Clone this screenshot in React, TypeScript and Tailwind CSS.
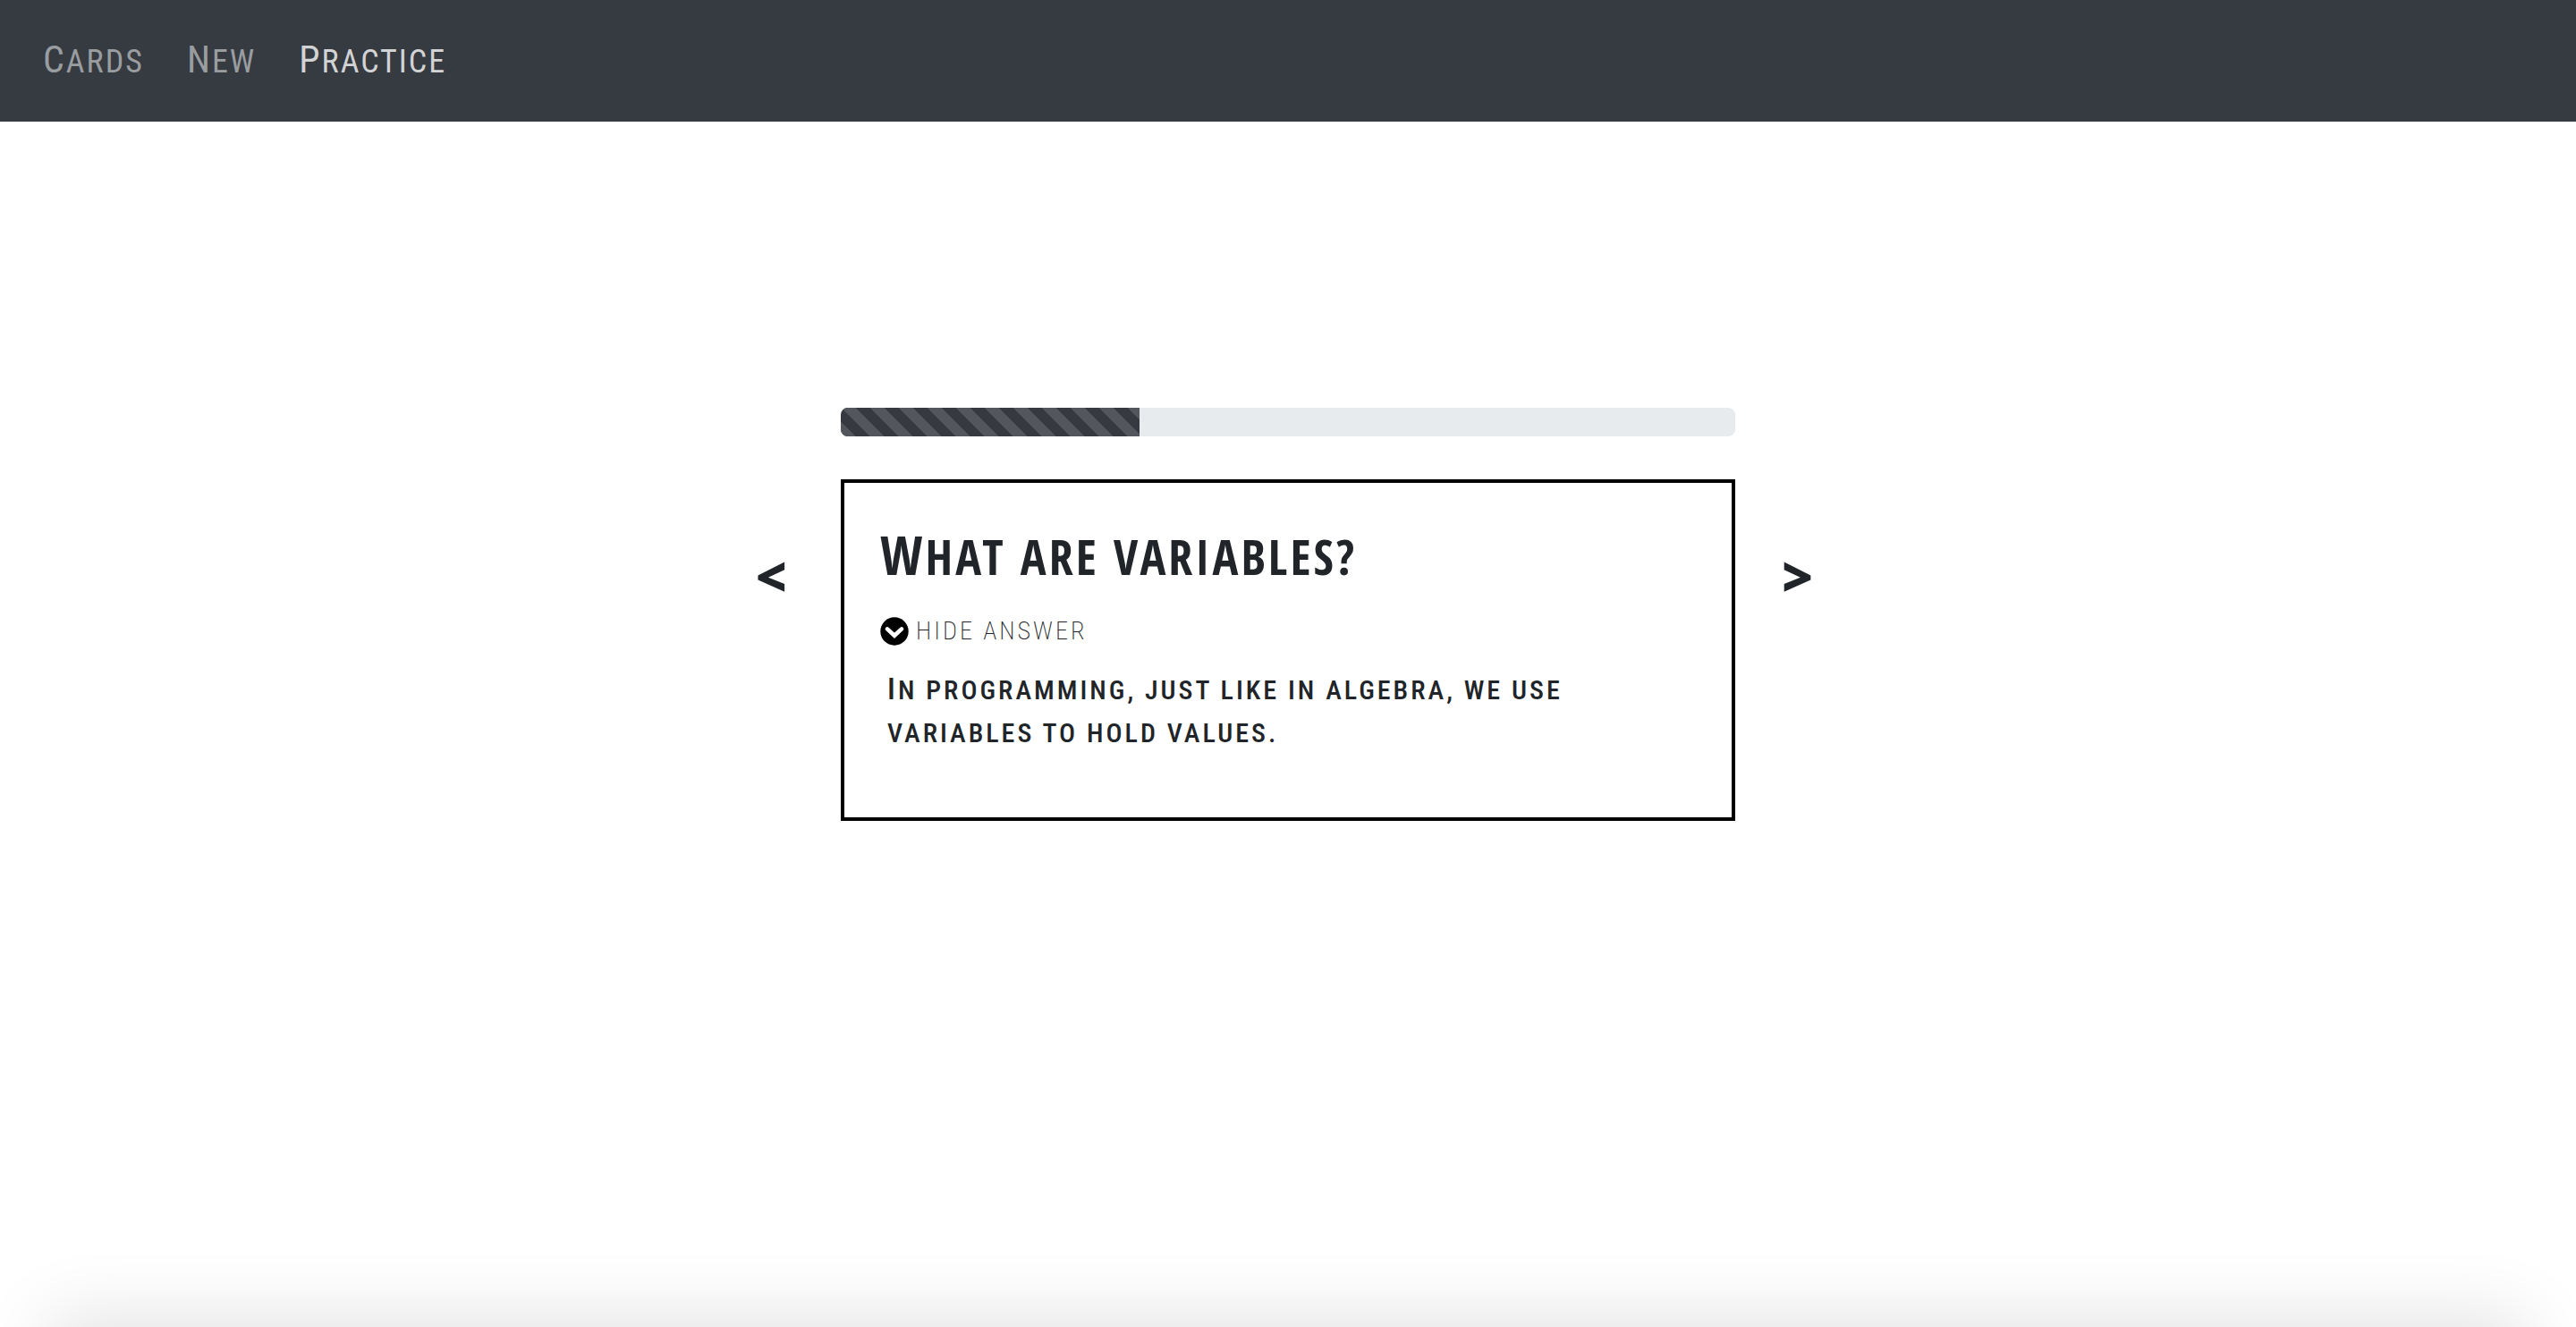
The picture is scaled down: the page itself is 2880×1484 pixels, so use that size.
import { useState } from "react";

const links = [
  { label: "Cards", active: false },
  { label: "New", active: false },
  { label: "Practice", active: true },
];

function ChevronCircle({ open }: { open: boolean }) {
  return (
    <svg viewBox="0 0 32 32" className={open ? "size-8" : "size-8 -rotate-90"} aria-hidden="true">
      <circle cx="16" cy="16" r="15.7" fill="#000" />
      <path d="M8 13.4 16 20.8 24 13.4" fill="none" stroke="#fff" strokeWidth="4.6" strokeLinecap="round" strokeLinejoin="miter" />
    </svg>
  );
}

function Progress({ value }: { value: number }) {
  return (
    <div
      role="progressbar"
      aria-label="Practice progress"
      aria-valuenow={value}
      aria-valuemin={0}
      aria-valuemax={100}
      className="h-8 overflow-hidden rounded-lg bg-[#e8ebee]"
    >
      <div
        className="h-full bg-[#363940] bg-[linear-gradient(45deg,#53575b_25%,transparent_25%,transparent_50%,#53575b_50%,#53575b_75%,transparent_75%,transparent)] bg-[length:32px_32px]"
        style={{ width: `${value}%` }}
      />
    </div>
  );
}

export default function App() {
  const [open, setOpen] = useState(true);

  return (
    <div className="relative flex min-h-screen flex-col overflow-hidden bg-white font-['Roboto_Condensed',sans-serif] text-[#212529]">
      <nav className="flex h-34 items-center gap-12 bg-[#363a41] px-12 text-[36px] leading-16 tracking-[2px] uppercase">
        {links.map(({ label, active }) => (
          <a
            key={label}
            href="#"
            aria-current={active ? "page" : undefined}
            className={`inline-block first-letter:text-[42px] ${active ? "text-[#d2d3d4]" : "text-[#9a9da0]"}`}
          >
            {label}
          </a>
        ))}
      </nav>

      <main className="mx-auto mt-80 grid w-full max-w-[1200px] grid-cols-[100px_1fr_100px]">
        <div className="col-start-2">
          <Progress value={33.4} />
        </div>

        <button type="button" aria-label="Previous card" className="row-start-2 mt-31 mr-15 self-start justify-self-end font-['Noto_Sans',sans-serif] text-[60px] leading-16 font-black">
          &lt;
        </button>
        <article className="row-start-2 mt-12 min-h-[382px] border-4 border-black p-10">
          <h1 className="font-['Open_Sans_Condensed','Roboto_Condensed',sans-serif] text-[54px] leading-20 font-bold tracking-[3px] uppercase first-letter:text-[60px]">What are variables?</h1>
          <button type="button" aria-expanded={open} onClick={() => setOpen(!open)} className="mt-7 flex items-center gap-2">
            <ChevronCircle open={open} />
            <span className="text-[28px] leading-8 font-extralight tracking-[3px] uppercase">
              {open ? "Hide Answer" : "Show Answer"}
            </span>
          </button>
          {open && (
            <p className="mt-6 max-w-[820px] px-2 text-[30px] leading-12 font-medium tracking-[3px] uppercase first-letter:text-[34px]">
              In programming, just like in algebra, we use variables to hold values.
            </p>
          )}
        </article>
        <button type="button" aria-label="Next card" className="row-start-2 mt-31 ml-13 self-start justify-self-start font-['Noto_Sans',sans-serif] text-[60px] leading-16 font-black">
          &gt;
        </button>
      </main>

      <div className="pointer-events-none absolute inset-x-16 top-full h-24 rounded-lg shadow-[0_0_80px_12px_#0000001d]" />
    </div>
  );
}
